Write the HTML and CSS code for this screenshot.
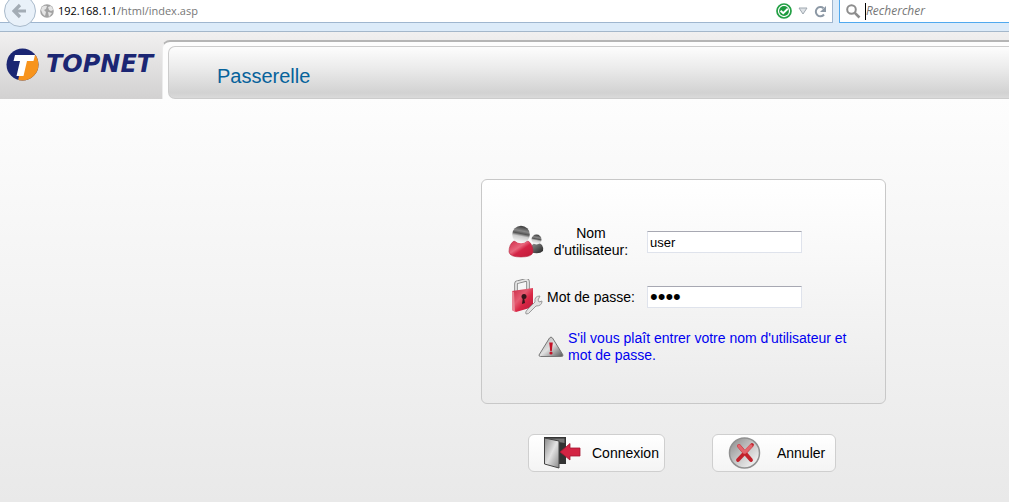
FILE: index.html
```html
<!DOCTYPE html>
<html lang="fr">
<head>
<meta charset="utf-8">
<title>Passerelle</title>
<link rel="stylesheet" href="styles.css">
</head>
<body>
<div class="toolbar">
  <div class="address">
    <button class="back" type="button" aria-label="Précédent">
      <svg width="16" height="16" viewBox="0 0 16 16"><path d="M8 2 2 8l6 6M2.500 8H14" fill="none" stroke="#a3acb5" stroke-width="3.200"/></svg>
    </button>
    <svg class="globe" width="14" height="14" viewBox="0 0 14 14"><circle cx="7" cy="7" r="6.800" fill="#a2a2a2"/><path d="M2 3q3-2 5-1L6 5 4 6l2 2-1 4Q2 10 1 6zM8 3l3-1q2 2 2 4l-2 1-2-1zM8 8l4 1-3 4z" fill="#e4e4e4"/></svg>
    <a class="url" href="#"><span class="host">192.168.1.1</span>/html/index.asp</a>
    <svg width="16" height="16" viewBox="0 0 16 16"><circle cx="8" cy="8" r="7" fill="#fff" stroke="#23a045" stroke-width="1.700"/><circle cx="8" cy="8" r="4.900" fill="#1d9a3e"/><path d="m4.600 7.800 2.600 2.400 4.600-4.400" fill="none" stroke="#fff" stroke-width="2"/></svg>
    <svg class="drop" width="10" height="8" viewBox="0 0 10 8"><path d="M1 1h8L5 7z" fill="#dfe3e7" stroke="#9fa8b0"/></svg>
    <button class="reload" type="button" aria-label="Actualiser">
      <svg width="13" height="13" viewBox="0 0 13 13"><path d="M9.500 3.200A4.600 4.600 0 1 0 10 9.500" fill="none" stroke="#8c98a5" stroke-width="2"/><path d="M12 1v6H6z" fill="#8c98a5"/></svg>
    </button>
  </div>
  <label class="search">
    <svg width="15" height="15" viewBox="0 0 15 15"><circle cx="5.500" cy="5.500" r="4.300" fill="none" stroke="#8d8d8d" stroke-width="2"/><path d="m8.800 8.800 4.700 4.700" stroke="#8d8d8d" stroke-width="2.600"/></svg>
    <span class="caret"></span>
    <input type="text" placeholder="Rechercher" aria-label="Rechercher">
  </label>
</div>

<header class="banner">
  <div class="brand">
    <svg width="33" height="33" viewBox="0 0 33 33"><defs><clipPath id="disc"><circle cx="16.500" cy="16.500" r="16"/></clipPath></defs><g clip-path="url(#disc)"><path d="M0 0h33v33H0z" fill="#1b2673"/><path d="M28.500 7H33v26H12l1-5 4-15h10z" fill="#f7941d"/><path d="M9 7h20l-1.500 6H21l-3.500 15h-7L14 13H7.500z" fill="#fff"/></g></svg>
    <span class="brand-name">TOPNET</span>
  </div>
  <div class="tab"><h1 class="title">Passerelle</h1></div>
</header>

<main>
  <form class="login">
    <section class="card">
      <div class="row">
        <svg width="36" height="34" viewBox="0 0 36 34">
          <defs>
            <linearGradient id="hair" x1=".6" x2=".4" y2="1"><stop offset="0" stop-color="#333"/><stop offset=".3" stop-color="#888"/><stop offset=".45" stop-color="#555"/><stop offset=".6" stop-color="#ccc"/><stop offset="1" stop-color="#fff"/></linearGradient>
            <linearGradient id="red" x2="1" y2="1"><stop offset="0" stop-color="#d02a48"/><stop offset=".4" stop-color="#e8667c"/><stop offset=".55" stop-color="#d42546"/><stop offset="1" stop-color="#c01a38"/></linearGradient>
            <linearGradient id="dark" x2="1" y2="1"><stop offset="0" stop-color="#999"/><stop offset="1" stop-color="#222"/></linearGradient>
          </defs>
          <path d="M22 27q0-9 7-9t6 8q-4 4-13 1" fill="url(#dark)"/><circle cx="28.500" cy="14.500" r="5" fill="url(#hair)"/>
          <path d="M1 27q0-8 5-11 3 1.500 7 1.500t7-1.500q5 3 5 11-1 5-12 5T1 27" fill="url(#red)" stroke="#b32640" stroke-width=".6"/>
          <circle cx="13" cy="9.500" r="8.800" fill="url(#hair)"/>
        </svg>
        <label class="name" for="user">Nom d'utilisateur:</label>
        <input class="field" id="user" type="text" value="user">
      </div>
      <div class="row tight">
        <svg width="36" height="36" viewBox="0 0 36 36">
          <defs><linearGradient id="lock" x2="1" y2="1"><stop offset="0" stop-color="#c92845"/><stop offset=".4" stop-color="#e55a70"/><stop offset=".6" stop-color="#d92745"/><stop offset="1" stop-color="#b5183a"/></linearGradient></defs>
          <path d="M8 15V5q0-2 2-2l8-2q2 0 2 2v9" fill="none" stroke="#858585" stroke-width="3.600"/><path d="M8 15V5q0-2 2-2l8-2q2 0 2 2v9" fill="none" stroke="#e4e4e4" stroke-width="1.800"/>
          <path d="m4 12 21-3v19L8 33l-4-2z" fill="url(#lock)"/><path d="m4 12 2 1 1 20-3-2z" fill="#e98795"/>
          <circle cx="16" cy="17.500" r="2.500" fill="#35151b"/><path d="m15 18-1 7 3-1-1-6z" fill="#35151b"/>
          <path d="m19 31 8-8q-1-6 5-6l-2 4 1 2 3-1q0 5-6 5l-6 6q-1 2-4 2-1-2 1-4" fill="#e2e2e2" stroke="#9a9a9a"/>
        </svg>
        <label class="name" for="pass">Mot de passe:</label>
        <input class="field secret" id="pass" type="password" value="user">
      </div>
      <div class="notice">
        <svg width="26" height="22" viewBox="0 0 26 22">
          <defs><linearGradient id="steel" x2="1" y2="1"><stop offset="0" stop-color="#aaa"/><stop offset=".5" stop-color="#e0e0e0"/><stop offset="1" stop-color="#555"/></linearGradient></defs>
          <path d="M11.500 2q1.500-2 3 0L25 19q0 1.500-1.500 1.500h-21Q1 20.500 1 19z" fill="url(#steel)" stroke="#777"/><path d="M11.200 6.500h3.600l-1 8.500h-1.600z" fill="#c31328"/><circle cx="13" cy="17" r="1.600" fill="#c31328"/>
        </svg>
        <p class="message">S'il vous plaît entrer votre nom d'utilisateur et mot de passe.</p>
      </div>
    </section>
    <div class="actions">
      <button class="action" type="button">
        <svg width="38" height="32" viewBox="0 0 38 32">
          <defs><linearGradient id="door" x2="1" y2="1"><stop offset="0" stop-color="#888"/><stop offset=".5" stop-color="#e2e2e2"/><stop offset="1" stop-color="#888"/></linearGradient></defs>
          <path d="M1 0h22v27H1z" fill="#333"/><path d="M3 1.500h18.500V6L3 3z" fill="#777"/><path d="m1.500 1 14.500 3v27L1.500 27z" fill="url(#door)" stroke="#444"/>
          <path d="m17 15 10-8.500v4.500h10v8H27v4z" fill="#d32443" stroke="#a51733" stroke-width=".8"/>
        </svg>
        Connexion
      </button>
      <button class="action wide" type="button">
        <svg width="33" height="32" viewBox="0 0 33 32">
          <defs><linearGradient id="ring" x2="1" y2="1"><stop offset="0" stop-color="#888"/><stop offset=".5" stop-color="#c8c8c8"/><stop offset="1" stop-color="#fff"/></linearGradient></defs>
          <circle cx="16.500" cy="16" r="15" fill="url(#ring)" stroke="#909090" stroke-width="1.500"/>
          <path d="m11 9 12 14M24 8 10 23" stroke="#c3222c" stroke-width="3.800" stroke-linecap="round"/><path d="m11 9 5 6M23 9l-6 6" stroke="#e2666d" stroke-width="3.200" stroke-linecap="round"/>
        </svg>
        Annuler
      </button>
    </div>
  </form>
</main>
</body>
</html>
```
FILE: styles.css
```css
* { box-sizing: border-box; }
body {
  margin: 0;
  min-height: 100vh;
  display: flex;
  flex-direction: column;
  font: 14px/17px "Liberation Sans", Arial, sans-serif;
  color: #000;
}
button, input { font: inherit; color: inherit; }
svg { flex: none; }

.toolbar {
  display: flex;
  gap: 6px;
  height: 32px;
  padding-bottom: 8px;
  background: #dcebf9;
  border-bottom: 1px solid #a4b7ca;
  font: 12px/16px "Open Sans", "Noto Sans", sans-serif;
}
.address {
  flex: 0 1 833px;
  display: flex;
  align-items: center;
  background: #fff;
  border: solid #9fb6cf;
  border-width: 0 1px 1px 0;
  padding-right: 5px;
}
.back {
  align-self: flex-end;
  display: grid;
  place-items: center;
  width: 32px;
  height: 32px;
  margin: 0 4px -5px;
  padding: 0;
  border: 1px solid #a9bacb;
  border-radius: 50%;
  background: #e9f1f9;
}
.url {
  flex: 1;
  margin-left: 4px;
  font-size: 11px;
  color: #777;
  text-decoration: none;
}
.host { color: #000; }
.drop { margin: 0 6px; }
.reload { display: flex; padding: 0; border: 0; background: none; }
.search {
  flex: 1;
  display: flex;
  align-items: center;
  min-width: 0;
  padding-left: 6px;
  background: #fff;
  border: solid #4fa9ef;
  border-width: 0 0 1px 1px;
}
.caret { width: 1px; height: 17px; margin-left: 4px; background: #000; }
.search input {
  flex: 1;
  min-width: 0;
  padding: 0;
  border: 0;
  font-size: 12px;
  background: none;
}
.search input::placeholder { color: #777; font-style: italic; }

.banner {
  display: flex;
  height: 67px;
  background: linear-gradient(#f1f0f0, #d2d1d1);
}
.brand {
  display: flex;
  align-items: center;
  gap: 7px;
  width: 162px;
  padding: 0 0 3px 6px;
}
.brand-name {
  font: italic bold 24px/28px "DejaVu Sans", sans-serif;
  color: #1b2673;
}
.tab {
  flex: 1;
  margin-top: 8px;
  padding: 4px 0 0 5px;
  background: #fdfdfd;
  border: solid #b5b5b5;
  border-width: 2px 0 0 1px;
  border-left-color: #ececec;
  border-radius: 8px 0 0;
}
.title {
  margin: 0;
  height: 100%;
  padding: 17px 0 0 48px;
  border: solid #ccc;
  border-width: 1px 0 1px 1px;
  border-radius: 7px 0 0 7px;
  background: linear-gradient(#fdfdfd, #ececec 40%, #d2d2d2 90%, #dadada);
  font-size: 20px;
  line-height: 24px;
  font-weight: normal;
  color: #06629b;
}

main {
  flex: 1;
  padding: 80px 16px 30px 481px;
  background: linear-gradient(#fdfdfd, #e9e9e9);
}
.login { max-width: 405px; }
.card {
  display: flex;
  flex-direction: column;
  padding: 44px 26px 39px;
  border: 1px solid #c8c8c8;
  border-radius: 6px;
  background: linear-gradient(#fff, #ebebeb);
}
.row {
  display: flex;
  align-items: center;
  min-height: 36px;
  margin-bottom: 19px;
}
.tight { margin-bottom: 15px; }
.name { width: 94px; text-align: center; }
.field {
  width: 155px;
  height: 22px;
  margin-left: 9px;
  padding: 1px 2px;
  border: 1px solid #dfe3ec;
  border-top-color: #a7a8b2;
  background: #fff;
  font-size: 13px;
}
.secret { font-size: 22px; }
.notice {
  display: flex;
  align-items: center;
  gap: 4px;
  padding-left: 30px;
}
.message { margin: 0; color: #0000f0; }
.actions {
  display: flex;
  gap: 47px;
  margin: 30px 0 0 47px;
}
.action {
  display: flex;
  align-items: center;
  gap: 11px;
  height: 38px;
  padding: 0 5px 0 14px;
  border: 1px solid #cfcfcf;
  border-radius: 6px;
  background: linear-gradient(#fff, #f4f4f4);
}
.wide { gap: 16px; padding: 0 10px 0 15px; }
```
